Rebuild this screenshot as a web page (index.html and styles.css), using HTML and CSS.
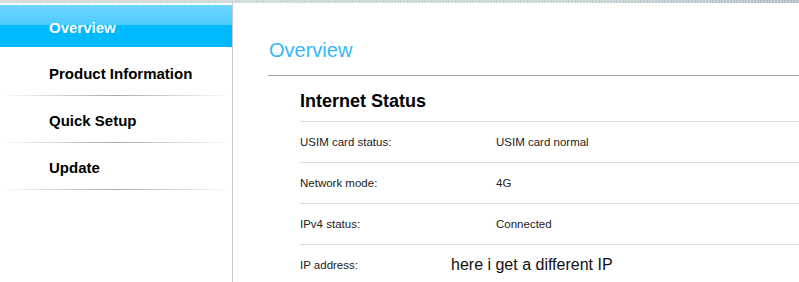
FILE: index.html
```html
<!DOCTYPE html>
<html lang="en">
<head>
    <meta charset="UTF-8">
    <title>Overview</title>
    <link rel="stylesheet" href="styles.css">
</head>
<body>
    <div class="topbar"></div>
    <div class="layout">
        <ul class="menu">
            <li class="menu-item active">Overview</li>
            <li class="menu-item">Product Information</li>
            <li class="menu-item">Quick Setup</li>
            <li class="menu-item">Update</li>
        </ul>
        <div class="main">
            <h1 class="page-title">Overview</h1>
            <div class="section">
                <h2 class="section-title">Internet Status</h2>
                <div class="row">
                    <span class="label">USIM card status:</span>
                    <span class="value">USIM card normal</span>
                </div>
                <div class="row">
                    <span class="label">Network mode:</span>
                    <span class="value">4G</span>
                </div>
                <div class="row">
                    <span class="label">IPv4 status:</span>
                    <span class="value">Connected</span>
                </div>
                <div class="row last">
                    <span class="label">IP address:</span>
                    <span class="note">here i get a different IP</span>
                </div>
            </div>
        </div>
    </div>
</body>
</html>
```

FILE: styles.css
```css
html, body {
    margin: 0;
    padding: 0;
    background: #fff;
    overflow: hidden;
}
body {
    font-family: 'Liberation Sans', Arial, sans-serif;
    color: #000;
    height: 282px;
}
.topbar {
    height: 3px;
    background:
        repeating-linear-gradient(to right, rgba(255, 255, 255, 0.35) 0 1px, transparent 1px 3px),
        linear-gradient(to right, #d3d9da, #ccd3d5 70%, #aebfc4);
}
.layout {
    display: flex;
    height: 279px;
}
.menu {
    list-style: none;
    margin: 0;
    padding: 2px 0 0;
    width: 232px;
    border-right: 1px solid #c9c9c9;
    flex-shrink: 0;
}
.menu-item {
    height: 47px;
    padding: 3px 0 0 49px;
    box-sizing: border-box;
    display: flex;
    align-items: center;
    font-size: 15px;
    font-weight: bold;
    color: #000;
    border-bottom: 1px solid transparent;
    border-image: linear-gradient(to right, rgba(200, 200, 200, 0), #aaa 50%, rgba(200, 200, 200, 0)) 1;
}
.menu-item.active {
    height: 42px;
    margin-bottom: 2px;
    padding-top: 2px;
    color: #fff;
    border: none;
    background: linear-gradient(to bottom, #6dd6ff 0%, #4ccbff 48%, #00baff 48%, #00baff 100%);
}
.main {
    flex: 1;
    padding-left: 35px;
}
.page-title {
    margin: 35px 0 0;
    font-size: 20px;
    line-height: 24px;
    font-weight: normal;
    color: #33b9f5;
    padding: 0 0 13px 1px;
    border-bottom: 1px solid #a3a3a3;
}
.section {
    margin-left: 32px;
}
.section-title {
    margin: 13px 0 0;
    font-size: 18px;
    line-height: 24px;
    padding-bottom: 8px;
    border-bottom: 1px solid #dcdcdc;
}
.row {
    display: flex;
    align-items: center;
    height: 40px;
    border-bottom: 1px solid #dcdcdc;
    font-size: 11.5px;
    color: #222;
}
.row.last {
    border-bottom: none;
}
.label {
    width: 196px;
    flex-shrink: 0;
}
.note {
    margin-left: -45px;
    font-size: 16px;
    color: #111;
}
```
